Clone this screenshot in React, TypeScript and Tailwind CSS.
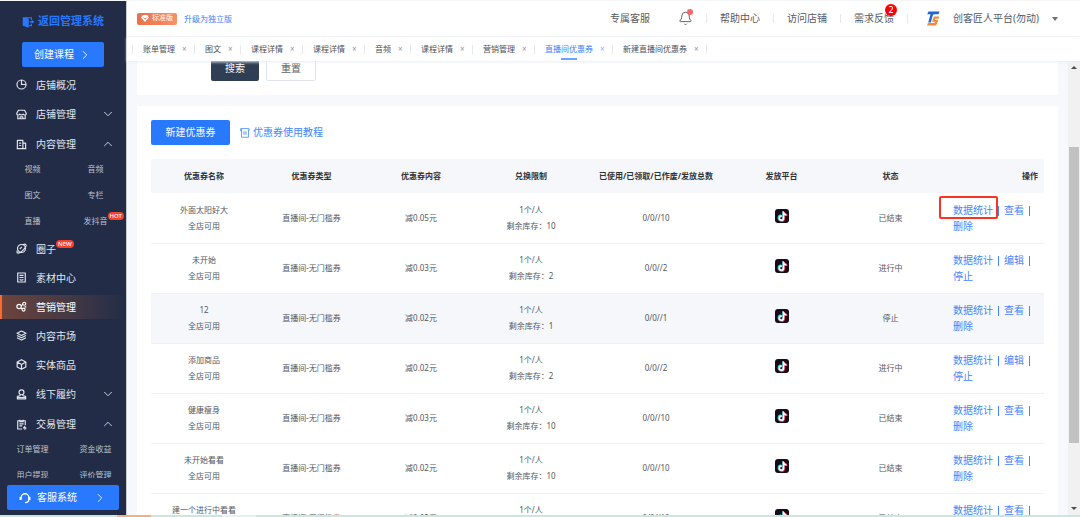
import React from 'react';
import { Bell, ChevronDown, ChevronRight, ChevronUp } from 'lucide-react';
import { FaTiktok } from 'react-icons/fa6';

interface NavItem {
  label: string;
  icon: React.ReactNode;
  badge?: string;
  active?: boolean;
  open?: boolean;
  children?: { label: string; badge?: string }[];
}

interface Coupon {
  name: string;
  amount: string;
  stock: number;
  usage: string;
  status: string;
  actions: string[];
  hovered?: boolean;
  marked?: boolean;
}

const Icon: React.FC<{ children: React.ReactNode }> = ({ children }) => (
  <svg
    viewBox="0 0 16 16"
    className="size-[11px] shrink-0"
    fill="none"
    stroke="currentColor"
    strokeWidth="1.7"
    strokeLinejoin="round"
    aria-hidden="true"
  >
    {children}
  </svg>
);

const navItems: NavItem[] = [
  {
    label: '店铺概况',
    icon: (
      <Icon>
        <circle cx="8" cy="8" r="6.6" />
        <path d="M8 1.4V8h6.6" />
      </Icon>
    ),
  },
  {
    label: '店铺管理',
    icon: (
      <Icon>
        <path d="M3.5 1.8h9L15 6.500c0 2.500-3 3-4.500 1-1.200 1.500-3.800 1.500-5 0-1.500 2-4.500 1.500-4.500-1z" />
        <path d="M2.600 9v5.200h10.800V9M6 14v-2.500h4V14" />
      </Icon>
    ),
    children: [],
  },
  {
    label: '内容管理',
    icon: (
      <Icon>
        <path d="M2 14V2h8v12M10 6h4v8M1 14h14M4.500 6h3M4.500 9.500h3" />
      </Icon>
    ),
    open: true,
    children: [
      { label: '视频' },
      { label: '音频' },
      { label: '图文' },
      { label: '专栏' },
      { label: '直播' },
      { label: '发抖音', badge: 'HOT' },
    ],
  },
  {
    label: '圈子',
    badge: 'NEW',
    icon: (
      <Icon>
        <circle cx="8" cy="8" r="5.800" />
        <path d="M10 2.500c3-1.500 5-1 4.700 1.500-.6 3.500-7.500 10-11 10.800C1.300 15 .8 13.500 2 11M5.500 9L8.500 5.500" />
      </Icon>
    ),
  },
  {
    label: '素材中心',
    icon: (
      <Icon>
        <path d="M2.500 1.500h11v13h-11zM5 5h6M5 8h6M5.500 10.500c1 1.800 4 1.800 5 0" />
      </Icon>
    ),
  },
  {
    label: '营销管理',
    active: true,
    icon: (
      <Icon>
        <circle cx="4.500" cy="8" r="3.200" />
        <circle cx="12" cy="4" r="2.200" />
        <circle cx="11" cy="12.500" r="2.200" />
        <path d="M7.500 6.800L10 5.200M7 10l2.300 1.400M12.500 8.500h2.500" />
      </Icon>
    ),
  },
  {
    label: '内容市场',
    icon: (
      <Icon>
        <path d="M8 1.500l6.500 3.300L8 8 1.500 4.800zM1.500 8L8 11.300 14.500 8M1.500 11.200L8 14.500l6.500-3.300" />
      </Icon>
    ),
  },
  {
    label: '实体商品',
    icon: (
      <Icon>
        <path d="M8 1l6.300 3.500v7L8 15l-6.300-3.500v-7zM1.700 4.500L8 8l6.300-3.500M8 8v7" />
      </Icon>
    ),
  },
  {
    label: '线下履约',
    icon: (
      <Icon>
        <circle cx="8" cy="4.800" r="3.600" />
        <path d="M6.200 8L5.800 9.800 2 10.800v3.700h12v-3.700l-3.800-1L9.800 8M2 12.500h12" />
      </Icon>
    ),
    children: [],
  },
  {
    label: '交易管理',
    icon: (
      <Icon>
        <path d="M9 14.500H2.500V2.500h11V9M5.500 1v3h5V1M5 7h6M5 10h4M13 10.500l-2 2.500h3.500L12.500 15.500" />
      </Icon>
    ),
    open: true,
    children: [
      { label: '订单管理' },
      { label: '资金收益' },
      { label: '用户提现' },
      { label: '评价管理' },
    ],
  },
];

const tabs = [
  '账单管理',
  '图文',
  '课程详情',
  '课程详情',
  '音频',
  '课程详情',
  '营销管理',
  '直播间优惠券',
  '新建直播间优惠券',
];
const activeTab = 7;

const columns = [
  { title: '优惠券名称', width: 'w-[106px]' },
  { title: '优惠券类型', width: 'w-[109px]' },
  { title: '优惠券内容', width: 'w-[110px]' },
  { title: '兑换限制', width: 'w-[110px]' },
  { title: '已使用/已领取/已作废/发放总数', width: 'w-[140px]' },
  { title: '发放平台', width: 'w-[111px]' },
  { title: '状态', width: 'w-[107px]' },
];

const coupons: Coupon[] = [
  { name: '外面太阳好大', amount: '减0.05元', stock: 10, usage: '0/0//10', status: '已结束', actions: ['数据统计', '查看', '删除'], marked: true },
  { name: '未开始', amount: '减0.03元', stock: 2, usage: '0/0//2', status: '进行中', actions: ['数据统计', '编辑', '停止'] },
  { name: '12', amount: '减0.02元', stock: 1, usage: '0/0//1', status: '停止', actions: ['数据统计', '查看', '删除'], hovered: true },
  { name: '添加商品', amount: '减0.02元', stock: 2, usage: '0/0//2', status: '进行中', actions: ['数据统计', '编辑', '停止'] },
  { name: '健康瘦身', amount: '减0.03元', stock: 10, usage: '0/0//10', status: '已结束', actions: ['数据统计', '查看', '删除'] },
  { name: '未开始看看', amount: '减0.02元', stock: 10, usage: '0/0//10', status: '已结束', actions: ['数据统计', '查看', '删除'] },
  { name: '建一个进行中看看', amount: '减0.02元', stock: 10, usage: '0/0//10', status: '已结束', actions: ['数据统计', '查看', '删除'] },
];

const Badge: React.FC<{ text: string }> = ({ text }) => (
  <span className="absolute -top-px left-full h-2 rounded-full bg-[#f8402f] px-[2px] text-[6px] leading-[8px] font-medium text-white">
    {text}
  </span>
);

const NavEntry: React.FC<{ item: NavItem }> = ({ item }) => (
  <li>
    <div className={`flex items-center ${item.children ? 'h-[30px]' : 'h-[29px]'}`}>
      <a
        href="#"
        className={`flex h-6 w-full items-center gap-[9px] border-l-2 pl-[14px] pr-[9px] text-[10px] ${
          item.active
            ? 'border-[#ff6a2b] bg-linear-to-r from-[#6c443c] to-[#232d47] text-white'
            : 'border-transparent'
        }`}
      >
        {item.icon}
        <span className="relative leading-4">
          {item.label}
          {item.badge && <Badge text={item.badge} />}
        </span>
        {item.children && (
          <span className="ml-auto">
            {item.open ? <ChevronUp size={14} strokeWidth={1.5} /> : <ChevronDown size={14} strokeWidth={1.5} />}
          </span>
        )}
      </a>
    </div>
    {item.open && (
      <ul className="-mt-[3px] grid grid-cols-[63px_63px] pl-px text-[8px] text-[#bcc2cf]">
        {item.children?.map((child) => (
          <li key={child.label} className="flex h-[26px] items-center justify-center">
            <a href="#" className="relative leading-4">
              {child.label}
              {child.badge && <Badge text={child.badge} />}
            </a>
          </li>
        ))}
      </ul>
    )}
  </li>
);

const Sidebar: React.FC = () => (
  <aside className="flex w-[127px] shrink-0 flex-col border-r border-[#c9ccd4] bg-[#222c46] text-[#e3e6ec]">
    <a href="#" className="flex h-[41px] items-center justify-center gap-1 text-[11px] font-bold text-[#2878ff]">
      <svg viewBox="0 0 16 16" className="size-[12px]" aria-hidden="true">
        <path d="M1 1.500h3l5 2v12l-8-2.500z" fill="currentColor" />
        <path d="M4 2.300h8.500v2.700M9 13h3.500v-2.700M10 7.700h5.500" fill="none" stroke="currentColor" strokeWidth="1.600" />
        <path d="M13 5l3 2.700-3 2.700z" fill="currentColor" />
      </svg>
      返回管理系统
    </a>
    <button className="mx-[22px] mb-[3px] flex h-[25px] shrink-0 items-center justify-center gap-1 rounded-xs bg-[#2979ff] text-[10px] text-white">
      创建课程
      <ChevronRight size={14} strokeWidth={1.5} />
    </button>
    <nav className="mr-0.5 min-h-0 flex-1 overflow-hidden">
      <ul>
        {navItems.map((item) => (
          <NavEntry key={item.label} item={item} />
        ))}
      </ul>
    </nav>
    <button className="mx-[7px] mt-[7px] mb-[5px] flex h-[25px] shrink-0 items-center rounded-xs bg-[#2979ff] px-[12px] text-[10px] text-white">
      <svg viewBox="0 0 16 16" className="mr-[6px] size-[12px]" fill="none" stroke="currentColor" strokeWidth="1.800" aria-hidden="true">
        <path d="M2.800 9.500V7.500a5.200 5.200 0 0 1 10.400 0v2c0 3-2 4.500-5.200 4.700" />
        <path d="M2 6.500v4M14 6.500v4" strokeWidth="2.600" />
      </svg>
      客服系统
      <ChevronRight size={14} strokeWidth={1.5} className="ml-auto" />
    </button>
  </aside>
);

const Divider: React.FC = () => <span className="h-[9px] w-px bg-[#e6e8ee]" />;

const Header: React.FC = () => (
  <header className="flex h-9 shrink-0 items-center border-b border-[#f2f3f7] bg-white pr-[22px] pl-[10px] text-[10px] text-[#555a63]">
    <span className="flex h-3 items-center gap-[3px] rounded-xs bg-linear-to-r from-[#e8714b] to-[#fb8f68] px-[4px] text-[7px] text-white">
      <svg viewBox="0 0 16 14" className="h-[7px] w-[8px]" aria-hidden="true">
        <path d="M4 0h8l4 5-8 9-8-9z" fill="currentColor" />
        <path d="M4.500 5L8 8.500 11.500 5" fill="none" stroke="#ec7850" strokeWidth="2" />
      </svg>
      标准版
    </span>
    <a href="#" className="ml-[7px] text-[8px] text-[#3a80ff]">
      升级为独立版
    </a>
    <div className="ml-auto flex items-center gap-[13px]">
      <a href="#">专属客服</a>
      <button className="relative ml-[15px]" aria-label="通知">
        <Bell size={15} strokeWidth={1.5} />
        <span className="absolute -top-0.5 right-0 size-[6px] rounded-full bg-[#fb6464]" />
      </button>
      <Divider />
      <a href="#">帮助中心</a>
      <Divider />
      <a href="#">访问店铺</a>
      <Divider />
      <a href="#" className="relative">
        需求反馈
        <span className="absolute -top-[7px] -right-[3px] size-3 rounded-full bg-[#fb0007] text-center text-[9px] leading-3 text-white">
          2
        </span>
      </a>
      <Divider />
      <button className="ml-[5px] flex items-center">
        <svg viewBox="0 0 28 30" className="mr-[13px] h-[15px] w-[14px]" aria-hidden="true">
          <path d="M5 1h22l-2 5.500H17c-2 0-3 1-3.600 3L9.500 23H4.500L9 6.500H2.500z" fill="#1d66d8" />
          <path d="M16 11h10.500l-1.300 4.500h-6.500l-.8 2.500h6.500l-2.600 8.500-3.300 2.500H2l2-5h13l.8-2.500h-6.300z" fill="#f58a3c" />
        </svg>
        创客匠人平台(勿动)
        <span className="ml-[13px] border-x-[3px] border-t-4 border-x-transparent border-t-[#6b6f77]" />
      </button>
    </div>
  </header>
);

const TabBar: React.FC = () => (
  <div className="z-10 flex h-6 shrink-0 items-center bg-white pl-[5px] text-[8px] text-[#4c5058] shadow-[0_1px_3px_#e4edfa]">
    <Divider />
    {tabs.map((tab, i) => (
      <React.Fragment key={i}>
        <div className={`flex h-full items-center pr-2 pl-[10px] ${i === activeTab ? 'text-[#3a80ff]' : ''}`}>
          <a href="#" className="relative flex h-full items-center">
            {tab}
            {i === activeTab && <span className="absolute bottom-px left-1/2 h-[2px] w-4 -translate-x-1/2 bg-[#6ba1ff]" />}
          </a>
          <button className="ml-[7px] w-1 opacity-60" aria-label="关闭">
            ×
          </button>
        </div>
        <Divider />
      </React.Fragment>
    ))}
  </div>
);

const TiktokIcon: React.FC = () => (
  <span className="relative inline-block size-[14px] rounded-[3px] bg-[#170b1a] align-middle">
    <FaTiktok size={10} className="absolute top-[2px] left-[2px] text-[#25e5e5]" />
    <FaTiktok size={10} className="absolute top-[3px] left-[3px] text-[#f8365b]" />
    <FaTiktok size={9} className="absolute top-[3px] left-[3px] text-white" />
  </span>
);

const CouponRow: React.FC<{ coupon: Coupon }> = ({ coupon }) => (
  <tr className={`h-[50px] border-b border-[#eff1f6] ${coupon.hovered ? 'bg-[#f5f7fb]' : ''}`}>
    <td>
      {coupon.name}
      <br />
      全店可用
    </td>
    <td>直播间-无门槛券</td>
    <td>{coupon.amount}</td>
    <td>
      1个/人
      <br />
      剩余库存：{coupon.stock}
    </td>
    <td>{coupon.usage}</td>
    <td className="pb-[6px]">
      <TiktokIcon />
    </td>
    <td>{coupon.status}</td>
    <td className="pr-[5px] pl-[9px] text-left text-[10px] text-[#4485ff]">
      {coupon.actions.map((action, i) => (
        <React.Fragment key={action}>
          <a href="#" className="relative inline-block">
            {action}
            {coupon.marked && i === 0 && (
              <span className="absolute -top-[6px] -right-[5px] -bottom-[1px] -left-[14px] rounded-xs border-2 border-[#fb3325]" />
            )}
          </a>
          {i < coupon.actions.length - 1 && <span className="mx-[5px] inline-block h-[10px] w-px bg-current align-middle" />}
        </React.Fragment>
      ))}
    </td>
  </tr>
);

const Scrollbar: React.FC = () => (
  <div className="flex w-3 shrink-0 flex-col items-center justify-between bg-[#f1f1f1] py-[5px]">
    <span className="border-x-[3px] border-b-[3px] border-x-transparent border-b-[#4a4a4a]" />
    <div className="flex w-full flex-1 flex-col px-px pt-[78px] pb-[64px]">
      <div className="flex-1 bg-[#c1c1c1]" />
    </div>
    <span className="border-x-[3px] border-t-[3px] border-x-transparent border-t-[#4a4a4a]" />
  </div>
);

const App: React.FC = () => {
  return (
    <div className="flex h-screen flex-col overflow-hidden bg-[#f4f5f7] pt-px font-['Noto_Sans','Noto_Sans_CJK_SC',sans-serif] whitespace-nowrap">
      <div className="flex min-h-0 flex-1">
        <Sidebar />
        <div className="flex min-w-0 flex-1 flex-col">
          <Header />
          <TabBar />
          <div className="flex min-h-0 flex-1 bg-[#f7f8fb]">
            <main className="min-w-0 flex-1 overflow-hidden px-[10px]">
              <section className="bg-white pb-[14px] pl-[74px]">
                <div className="-mt-[5px] flex gap-[7px] text-[10px]">
                  <button className="h-[25px] w-12 rounded-xs bg-[#2f3e55] text-white">搜索</button>
                  <button className="h-[25px] w-[50px] rounded-xs border border-[#e2e4ea] bg-white text-[#606266]">重置</button>
                </div>
              </section>
              <section className="mt-[11px] bg-white px-[14px] pt-[14px]">
                <div className="flex items-center text-[10px]">
                  <button className="h-[25px] w-[79px] rounded-xs bg-[#2979ff] text-white">新建优惠券</button>
                  <a href="#" className="ml-[10px] flex items-center gap-[3px] text-[#4485ff]">
                    <svg viewBox="0 0 16 16" className="size-[10px]" fill="none" stroke="currentColor" strokeWidth="1.300" aria-hidden="true">
                      <path d="M2.500 4.500H1v-3.500h13.500v3.500M2.500 2v12.800h11V3M5 6.500h6M5 9.500h6" />
                    </svg>
                    优惠券使用教程
                  </a>
                </div>
                <table className="mt-[14px] w-full table-fixed border-collapse text-center text-[8px] leading-4 text-[#55585e]">
                  <thead>
                    <tr className="h-[34px] bg-[#f5f7fb] text-[#303236]">
                      {columns.map((column) => (
                        <th key={column.title} className={`${column.width} font-bold`}>
                          {column.title}
                        </th>
                      ))}
                      <th className="w-[100px] pr-[6px] text-right font-bold">操作</th>
                    </tr>
                  </thead>
                  <tbody className="whitespace-normal">
                    {coupons.map((coupon) => (
                      <CouponRow key={coupon.name} coupon={coupon} />
                    ))}
                  </tbody>
                </table>
              </section>
            </main>
            <Scrollbar />
          </div>
        </div>
      </div>
      <div className="flex h-[2px] shrink-0 bg-[#c7e8dc]">
        <span className="ml-[117px] w-[34px] bg-[#f9ae73]" />
        <span className="ml-[71px] w-[34px] bg-[#e3f4ee]" />
      </div>
    </div>
  );
};

export default App;
